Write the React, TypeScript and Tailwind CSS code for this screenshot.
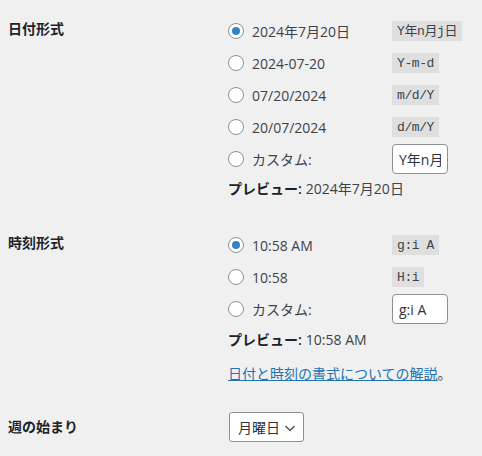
import React from "react"

const Radio = ({ checked }: { checked?: boolean }) => (
  <span className="mr-2 flex h-4 w-4 shrink-0 items-center justify-center rounded-full border border-[#8c8f94] bg-white">
    {checked && <span className="h-2 w-2 rounded-full bg-[#3582c4]" />}
  </span>
)

const Code = ({ children }: { children: React.ReactNode }) => (
  <code className="bg-black/[0.07] px-[5px] pt-[3px] pb-[2px] text-[13px] leading-[15px] tracking-[-0.4px] text-[#3c434a] font-['Liberation_Mono','Noto_Sans_CJK_JP',monospace]">
    {children}
  </code>
)

const Option = ({ text, code, checked }: { text: string, code: string, checked?: boolean }) => (
  <div className="flex h-8 items-center">
    <Radio checked={checked} />
    <span className="w-[140px]">{text}</span>
    <Code>{code}</Code>
  </div>
)

const Custom = ({ value }: { value: string }) => (
  <div className="flex h-8 items-center">
    <Radio />
    <span className="w-[140px]">カスタム:</span>
    <input
      readOnly
      value={value}
      className="h-[30px] w-[56px] rounded border border-[#8c8f94] bg-white px-[6px] text-[14px] text-[#2c3338] outline-none"
    />
  </div>
)

export default function App() {
  return (
    <div className="min-h-screen bg-[#f0f0f1] text-[14px] text-[#3c434a] font-['Segoe_UI','Open_Sans','Noto_Sans_CJK_JP',sans-serif]">
      {/* 日付形式 */}
      <div className="flex">
        <div className="w-[228px] shrink-0 pl-2 pt-[19px] leading-5 font-semibold text-[#1d2327]">日付形式</div>
        <div className="pt-[15px]">
          <Option text="2024年7月20日" code="Y年n月j日" checked />
          <Option text="2024-07-20" code="Y-m-d" />
          <Option text="07/20/2024" code="m/d/Y" />
          <Option text="20/07/2024" code="d/m/Y" />
          <Custom value="Y年n月j日" />
          <div className="flex h-[26px] items-center">
            <strong className="font-semibold text-[#1d2327]">プレビュー:</strong>
            <span className="ml-1">2024年7月20日</span>
          </div>
        </div>
      </div>

      {/* 時刻形式 */}
      <div className="mt-[28px] flex">
        <div className="w-[228px] shrink-0 pl-2 pt-1 leading-5 font-semibold text-[#1d2327]">時刻形式</div>
        <div>
          <Option text="10:58 AM" code="g:i A" checked />
          <Option text="10:58" code="H:i" />
          <Custom value="g:i A" />
          <div className="flex h-7 items-center">
            <strong className="font-semibold text-[#1d2327]">プレビュー:</strong>
            <span className="ml-1">10:58 AM</span>
          </div>
          <div className="mt-[7px] flex h-[26px] items-center">
            <a href="#" className="text-[#2271b1] underline underline-offset-1">日付と時刻の書式についての解説</a>
            <span>。</span>
          </div>
        </div>
      </div>

      {/* 週の始まり */}
      <div className="mt-[26px] flex items-center">
        <div className="w-[229px] shrink-0 pl-2 leading-5 font-semibold text-[#1d2327]">週の始まり</div>
        <div className="flex h-[30px] w-[75px] items-center justify-between rounded-[3px] border border-[#8c8f94] bg-white pl-2 pr-[7px] text-[#2c3338]">
          <span>月曜日</span>
          <svg width="12" height="12" viewBox="0 0 12 12" className="mt-[1px]">
            <path d="M1.5 4l4.5 4.5L10.5 4" fill="none" stroke="#50575e" strokeWidth="1.5" />
          </svg>
        </div>
      </div>
    </div>
  )
}
